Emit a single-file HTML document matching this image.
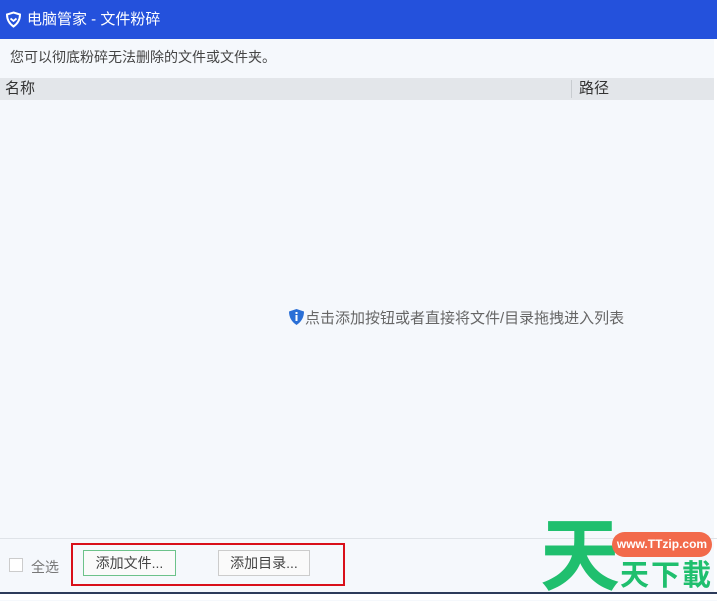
<!DOCTYPE html>
<html><head><meta charset="utf-8"><style>
*{margin:0;padding:0;box-sizing:border-box}
body{width:717px;height:600px;overflow:hidden;background:#f5f8fc;font-family:"Liberation Sans","Noto Sans CJK SC",sans-serif;position:relative;color:#333}
.title{position:absolute;left:0;top:0;width:717px;height:39px;background:#2451dc;color:#fff;font-size:15px;line-height:39px;padding-left:27px}
.desc{position:absolute;left:10px;top:47px;font-size:14px;color:#444}
.hdr{position:absolute;left:0;top:78px;width:714px;height:22px;background:#e3e6ea;font-size:15px;line-height:22px}
.hdr span{position:absolute}
.sep{position:absolute;left:571px;top:80px;width:1px;height:18px;background:#c8ccd0}
.mid{position:absolute;left:288px;top:308px;font-size:15px;color:#666;line-height:18px}
.bot{position:absolute;left:0;top:538px;width:717px;height:1px;background:#dfe3e8}
.dark{position:absolute;left:0;top:592px;width:717px;height:8px;background:#fff;border-top:2px solid #2d3b5a}
.btn{position:absolute;height:26px;border:1px solid #ccc;background:#fafafa;font-size:14px;line-height:24px;text-align:center;color:#444}
</style></head><body>
<div class="title"><svg style="position:absolute;left:5px;top:11px" width="17" height="17" viewBox="0 0 17 17"><path d="M8.5 1.5 L15 3.5 Q15 11 8.5 15.5 Q2 11 2 3.5Z" fill="none" stroke="#fff" stroke-width="2"/><path d="M5.5 7.5 L8.5 10 L11.5 7.5" fill="none" stroke="#fff" stroke-width="1.8"/></svg>电脑管家 - 文件粉碎</div>
<div class="desc">您可以彻底粉碎无法删除的文件或文件夹。</div>
<div class="hdr"><span style="left:5px">名称</span><span style="left:579px">路径</span></div>
<div class="sep"></div>
<div style="position:absolute;left:714px;top:39px;width:3px;height:553px;background:#fff"></div>
<div class="mid"><svg style="vertical-align:-3px" width="17" height="18" viewBox="0 0 17 18"><path d="M8.5 1 L16 3.5 Q16 12 8.5 17 Q1 12 1 3.5Z" fill="#2a6fd6"/><rect x="7.5" y="7" width="2" height="6" fill="#fff"/><rect x="7.5" y="4" width="2" height="2" fill="#fff"/></svg>点击添加按钮或者直接将文件/目录拖拽进入列表</div>
<div class="bot"></div>
<div style="position:absolute;left:9px;top:558px;width:14px;height:14px;border:1px solid #ccc;background:#fff"></div>
<div style="position:absolute;left:31px;top:557px;font-size:14px;color:#777">全选</div>
<div style="position:absolute;left:71px;top:543px;width:274px;height:43px;border:2px solid #d9101a"></div>
<div class="btn" style="left:83px;top:550px;width:93px;border-color:#6cc28a">添加文件...</div>
<div class="btn" style="left:218px;top:550px;width:92px">添加目录...</div>
<div class="dark"></div>
<div style="position:absolute;left:540px;top:517px;font-size:80px;font-weight:bold;color:#1fbf6e;line-height:80px">天</div>
<div style="position:absolute;left:612px;top:532px;width:100px;height:25px;border-radius:13px;background:#f26a4b;color:#fff;font-size:12px;font-weight:bold;line-height:25px;text-align:center">www.TTzip.com</div>
<div style="position:absolute;left:620px;top:560px;font-size:29px;font-weight:bold;color:#1fbf6e;line-height:32px;letter-spacing:2px">天下載</div>
</body></html>
